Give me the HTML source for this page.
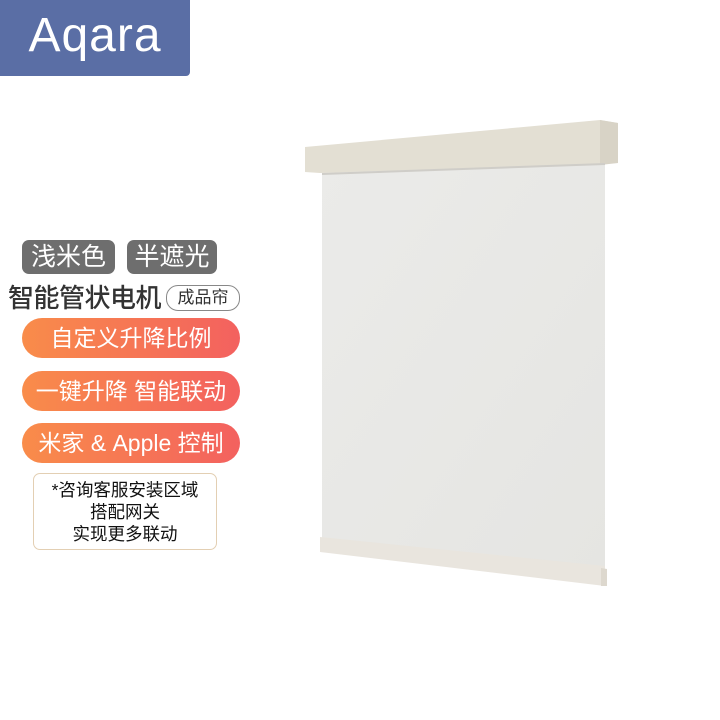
<!DOCTYPE html>
<html><head><meta charset="utf-8"><style>
body{margin:0;width:720px;height:720px;background:#fff;position:relative;overflow:hidden;font-family:"Liberation Sans","Noto Sans CJK SC",sans-serif}
.abs{position:absolute}
.logo{left:0;top:0;width:190px;height:76px;background:#5a6ea5;border-radius:0 0 4px 0;color:#fff;font-size:48px;line-height:72px;text-align:center;letter-spacing:1px}
.g{background:#6e6e6e;color:#fff;border-radius:7px;font-size:25px;line-height:34px;text-align:center;top:240px;height:34px}
.pill{left:22px;width:218px;height:40px;border-radius:20px;background:linear-gradient(90deg,#f98c4a,#f3615f);color:#fff;font-size:23px;line-height:40px;text-align:center}
</style></head><body>
<div class="abs logo">Aqara</div>
<div class="abs g" style="left:22px;width:93px">浅米色</div>
<div class="abs g" style="left:127px;width:90px">半遮光</div>
<div class="abs" style="left:8px;top:282px;font-size:26px;font-weight:500;color:#333;line-height:32px;letter-spacing:-0.5px">智能管状电机</div>
<div class="abs" style="left:166px;top:285px;width:72px;height:24px;border:1px solid #888;border-radius:12px;font-size:17px;line-height:24px;text-align:center;color:#333">成品帘</div>
<div class="abs pill" style="top:318px">自定义升降比例</div>
<div class="abs pill" style="top:371px">一键升降 智能联动</div>
<div class="abs pill" style="top:423px">米家 &amp; Apple 控制</div>
<div class="abs" style="left:33px;top:473px;width:184px;height:77px;border:1.5px solid #e3cfb3;border-radius:7px;font-size:17.5px;line-height:22px;text-align:center;color:#111;padding-top:5px;box-sizing:border-box;white-space:nowrap">*咨询客服安装区域<br>搭配网关<br>实现更多联动</div>
<svg class="abs" style="left:0;top:0" width="720" height="720">
<defs><linearGradient id="f" x1="0" y1="0" x2="1" y2="1"><stop offset="0" stop-color="#ebebe9"/><stop offset="1" stop-color="#e5e5e2"/></linearGradient></defs>
<polygon points="322,172 605,160 605,575 322,545" fill="url(#f)"/>
<polygon points="320,537 605,566 605,586 320,552" fill="#e9e5de"/>
<polygon points="601,568 607,569 607,586 601,586" fill="#ddd8ce"/>
<polygon points="305,147 600,120 618,123 618,163 320,173 305,172" fill="#e3dfd3"/>
<polygon points="600,120 618,123 618,163 600,165" fill="#d8d3c6"/>
<line x1="322" y1="174" x2="605" y2="164" stroke="#cfcdc8" stroke-width="2"/>
</svg>
</body></html>
